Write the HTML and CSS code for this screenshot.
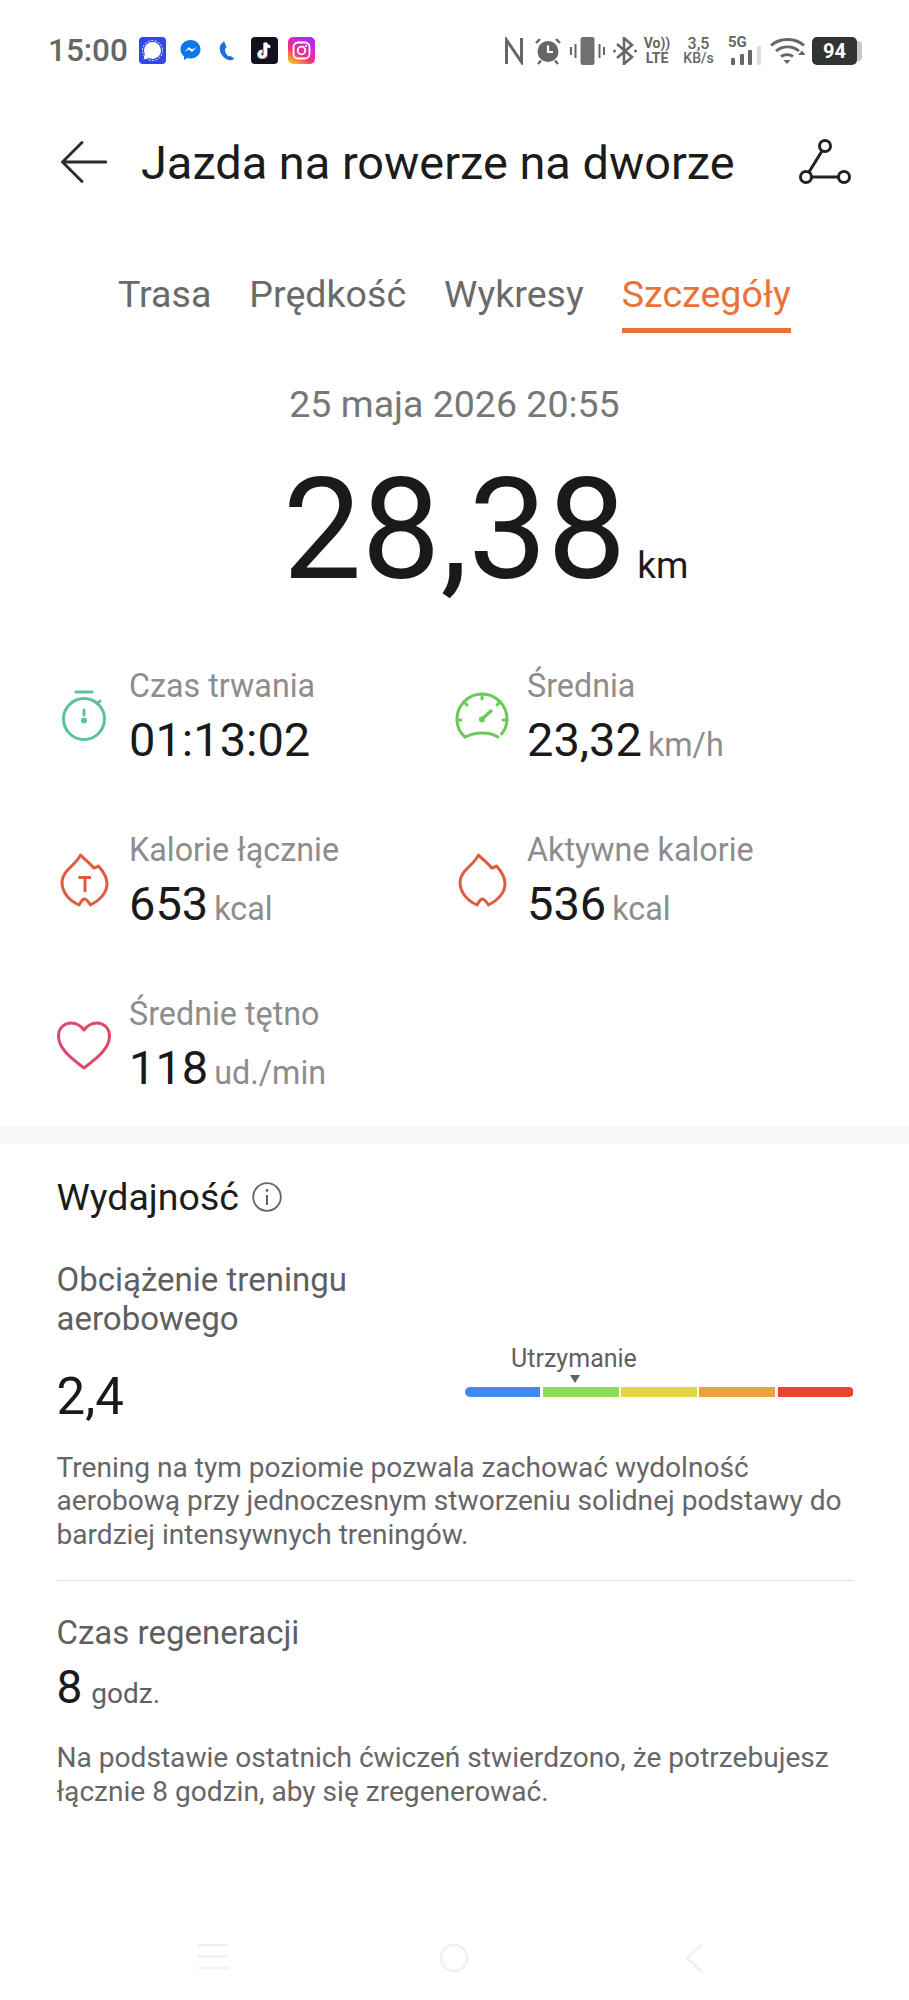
FILE: index.html
```html
<!DOCTYPE html>
<html lang="pl">
<head>
<meta charset="utf-8">
<title>Jazda na rowerze na dworze</title>
<link rel="stylesheet" href="styles.css">
</head>
<body>
<div class="page">
  <div class="statusbar">
    <div class="status-left">
      <span class="clock">15:00</span>
      <svg class="ico27 m-signal" viewBox="0 0 27 27"><rect width="27" height="27" rx="4" fill="#3247e8"/><circle cx="13.500" cy="13.500" r="8.500" fill="#fff"/><circle cx="13.500" cy="13.500" r="10" fill="none" stroke="#fff" stroke-width="1" stroke-dasharray="2 1.500"/><path d="M6 17l-1.500 5.500 5.500-1.500z" fill="#fff"/></svg>
      <svg class="m-msg" width="21" height="23" viewBox="0 0 21 23"><path d="M10.500 1C5 1 .5 5 .5 10.300c0 2.900 1.300 5.400 3.500 7.100V21l3.300-1.900c1 .3 2.100.5 3.200.5 5.500 0 10-4.100 10-9.300S16 1 10.500 1z" fill="#0a78ea"/><path d="M4.500 13l4.500-5 3 2.500 4.500-2.500-4.500 5-3-2.500z" fill="#fff"/></svg>
      <svg class="m-call" width="16" height="20" viewBox="0 0 16 20"><path d="M5 .5C2 2 .5 5 .8 8.500 1.200 13 5 18 10 19c2.500.5 5-.5 5.500-1.500-1-.5-2.500-1.500-4-2.500-1 .5-2 .5-3-.5C7 13 5.800 10.500 6 8.500c.2-1 .8-1.500 1.500-1.700C7 4.500 6 2 5 .5z" fill="#1d6fd8"/></svg>
      <svg class="ico27 m-tt" viewBox="0 0 27 27"><rect width="27" height="27" rx="4" fill="#11121f"/><path d="M14.500 5.500v11.500a3 3 0 1 1-3-3" fill="none" stroke="#3fe3de" stroke-width="3" transform="translate(-1 .5)"/><path d="M14.500 5.500v11.500a3 3 0 1 1-3-3" fill="none" stroke="#f0335c" stroke-width="3" transform="translate(1 .5)"/><path d="M14.500 5.500v11.500a3 3 0 1 1-3-3M14.500 5.500c.3 2.500 2 4 4.800 4.200" fill="none" stroke="#fff" stroke-width="3"/></svg>
      <svg class="ico27 m-ig" viewBox="0 0 27 27"><defs><linearGradient id="ig" x1="0.2" y1="1" x2="0.8" y2="0"><stop offset="0" stop-color="#fdc21e"/><stop offset=".35" stop-color="#f5337a"/><stop offset=".75" stop-color="#c92ad8"/><stop offset="1" stop-color="#a52bf0"/></linearGradient></defs><rect width="27" height="27" rx="5" fill="url(#ig)"/><rect x="5.500" y="5.500" width="16" height="16" rx="4.500" fill="none" stroke="#fff" stroke-width="1.800"/><circle cx="13.500" cy="13.500" r="3.800" fill="none" stroke="#fff" stroke-width="1.800"/><circle cx="18" cy="9" r="1" fill="#fff"/></svg>
    </div>
    <div class="status-right">
      <svg class="m-nfc" width="20" height="28" viewBox="0 0 20 28"><path d="M2.500 27V3l15 22V1" fill="none" stroke="#666" stroke-width="3"/></svg>
      <svg class="m-alarm" width="28" height="28" viewBox="0 0 28 28"><circle cx="14" cy="14.500" r="10.500" fill="#666"/><path d="M14 8.500v6.500h5" fill="none" stroke="#fff" stroke-width="2.200"/><path d="M2 6l4-4M26 6l-4-4M4 27l3-3.500M24 27l-3-3.500" stroke="#666" stroke-width="2.400" fill="none"/></svg>
      <svg class="m-vib" width="35" height="28" viewBox="0 0 35 28"><rect x="10.500" y="0" width="14" height="28" rx="2.500" fill="#707070"/><path d="M1 10v8M5.500 7v14M29.500 7v14M34 10v8" stroke="#666" stroke-width="2"/></svg>
      <svg class="m-bt" width="24" height="28" viewBox="0 0 24 28"><path d="M4 7l15 13-8 7V1l8 7L4 21" fill="none" stroke="#666" stroke-width="2.600"/><circle cx="1.500" cy="14" r="1.500" fill="#666"/><circle cx="22.500" cy="14" r="1.500" fill="#666"/></svg>
      <div class="volte"><span class="volte-top">Vo))</span><span>LTE</span></div>
      <div class="speed"><span class="speed-top">3,5</span><span>KB/s</span></div>
      <div class="net">
        <span class="net-label">5G</span>
        <svg class="net-bars" width="34" height="20" viewBox="0 0 34 20"><rect x="3" y="12" width="4" height="7" rx="1" fill="#666"/><rect x="12" y="8" width="4" height="11" rx="1" fill="#666"/><rect x="20" y="4" width="4" height="15" rx="1" fill="#666"/><rect x="29" y="0" width="4" height="19" rx="1" fill="#ddd"/></svg>
      </div>
      <svg class="m-wifi" width="35" height="28" viewBox="0 0 35 28"><path d="M1 8.500C10 .5 25 .5 34 8.500M6 14c6.500-5.500 16.500-5.500 23 0M11 19.500c3.500-2.500 9-2.500 12 0" fill="none" stroke="#666" stroke-width="2.800"/><path d="M13.500 23h7l-3.500 4zM28 18l4-4.500 3.500 4.500z" fill="#666"/></svg>
      <div class="battery"><span class="battery-body">94</span><span class="battery-tip"></span></div>
    </div>
  </div>

  <header class="titlebar">
    <svg class="back" width="46" height="42" viewBox="0 0 46 42"><path d="M21 1.500L1.500 21 21 40.500M1.500 21H45" fill="none" stroke="#2b2b2b" stroke-width="2.800" stroke-linecap="round" stroke-linejoin="round"/></svg>
    <h1 class="title">Jazda na rowerze na dworze</h1>
    <svg class="route" width="52" height="46" viewBox="0 0 52 46"><circle cx="26" cy="7" r="5.500" fill="none" stroke="#222" stroke-width="3"/><circle cx="7" cy="38" r="5.500" fill="none" stroke="#222" stroke-width="3"/><circle cx="45" cy="38" r="5.500" fill="none" stroke="#222" stroke-width="3"/><path d="M23 12L10 33M12.500 38h27" fill="none" stroke="#222" stroke-width="3"/></svg>
  </header>

  <nav class="tabs">
    <span class="tab">Trasa</span>
    <span class="tab">Prędkość</span>
    <span class="tab">Wykresy</span>
    <span class="tab tab-active">Szczegóły</span>
  </nav>

  <div class="date">25 maja 2026 20:55</div>
  <div class="distance"><span class="distance-num">28,38</span><span class="distance-unit">km</span></div>

  <section class="stats">
    <div class="stat">
      <svg class="stat-ico" width="54" height="54" viewBox="0 0 54 54"><g fill="none" stroke="#5cc1a0" stroke-width="3" stroke-linecap="round"><circle cx="27" cy="30" r="20.500"/><path d="M19 3h16M41 14l2-2M27 21v5"/></g><circle cx="27" cy="31.500" r="3" fill="#5cc1a0"/></svg>
      <div class="stat-text"><div class="stat-label">Czas trwania</div><div class="stat-value">01:13:02</div></div>
    </div>
    <div class="stat">
      <svg class="stat-ico" width="54" height="54" viewBox="0 0 54 54"><g transform="translate(0 3)"><g fill="none" stroke="#6cc95c" stroke-width="3" stroke-linecap="round"><path d="M10 45C4 40 2 33 2 27a25 25 0 0 1 50 0c0 6-2 11-5.500 15"/><path d="M10 45c10-5.500 25-5.500 33 0"/><path d="M27 2v5M9 10l3 3M45 10l-3 3M2 28h4M52 28h-4"/><path d="M27 27l9-8" stroke-width="3.500"/></g><circle cx="27" cy="27.500" r="3" fill="#6cc95c"/></g></svg>
      <div class="stat-text"><div class="stat-label">Średnia</div><div class="stat-value">23,32<span class="stat-unit">km/h</span></div></div>
    </div>
    <div class="stat">
      <svg class="stat-ico" width="54" height="54" viewBox="0 0 54 54"><path d="M23.500 2C27 6 33 10 36.500 15c1.500 0 3.500-1 5-2C46 18 50 25 50 31c0 9-8 17-16.500 21-2.500-4-4.500-6-6-6-2.500 0-3.500 3-5.500 6C13 48 5 40 5 29 5 18 19 12 23.500 2z" fill="none" stroke="#e05a3c" stroke-width="3" stroke-linejoin="round"/><path d="M21.500 24.500H34M28 24.500V39" fill="none" stroke="#e05a3c" stroke-width="3"/></svg>
      <div class="stat-text"><div class="stat-label">Kalorie łącznie</div><div class="stat-value">653<span class="stat-unit">kcal</span></div></div>
    </div>
    <div class="stat">
      <svg class="stat-ico" width="54" height="54" viewBox="0 0 54 54"><path d="M23.500 2C27 6 33 10 36.500 15c1.500 0 3.500-1 5-2C46 18 50 25 50 31c0 9-8 17-16.500 21-2.500-4-4.500-6-6-6-2.500 0-3.500 3-5.500 6C13 48 5 40 5 29 5 18 19 12 23.500 2z" fill="none" stroke="#e05a3c" stroke-width="3" stroke-linejoin="round"/></svg>
      <div class="stat-text"><div class="stat-label">Aktywne kalorie</div><div class="stat-value">536<span class="stat-unit">kcal</span></div></div>
    </div>
    <div class="stat">
      <svg class="stat-ico" width="54" height="54" viewBox="0 0 54 54"><path d="M27 51C17 43 1.500 33 1.500 19 1.500 11 7.500 6 14 6c6 0 10 3 13 7 3-4 7-7 13-7 6.500 0 12.500 5 12.500 13C52.500 33 37 43 27 51z" fill="none" stroke="#e0476b" stroke-width="3" stroke-linejoin="round"/></svg>
      <div class="stat-text"><div class="stat-label">Średnie tętno</div><div class="stat-value">118<span class="stat-unit">ud./min</span></div></div>
    </div>
  </section>

  <div class="band"></div>

  <section class="perf">
    <div class="perf-head">
      <h2 class="perf-title">Wydajność</h2>
      <svg class="info" width="30" height="30" viewBox="0 0 30 30"><circle cx="15" cy="15" r="13.800" fill="none" stroke="#666" stroke-width="1.800"/><path d="M15 13v10" stroke="#666" stroke-width="2"/><circle cx="15" cy="8.500" r="1.400" fill="#666"/></svg>
    </div>
    <div class="load">
      <div class="load-left">
        <div class="load-label">Obciążenie treningu<br>aerobowego</div>
        <div class="load-value">2,4</div>
      </div>
      <div class="gauge">
        <div class="gauge-label">Utrzymanie</div>
        <div class="gauge-mark"></div>
        <div class="gauge-bar">
          <span class="seg seg-blue"></span>
          <span class="seg seg-green"></span>
          <span class="seg seg-yellow"></span>
          <span class="seg seg-orange"></span>
          <span class="seg seg-red"></span>
        </div>
      </div>
    </div>
    <p class="note">Trening na tym poziomie pozwala zachować wydolność<br>aerobową przy jednoczesnym stworzeniu solidnej podstawy do<br>bardziej intensywnych treningów.</p>
    <div class="rule"></div>
    <div class="regen-label">Czas regeneracji</div>
    <div class="regen-value">8<span class="regen-unit">godz.</span></div>
    <p class="note note-regen">Na podstawie ostatnich ćwiczeń stwierdzono, że potrzebujesz<br>łącznie 8 godzin, aby się zregenerować.</p>
  </section>

  <footer class="navbar">
    <svg class="nav-menu" width="30" height="30" viewBox="0 0 30 30"><path d="M0 2h30M0 13.500h30M0 25h30" stroke="#f0f0f0" stroke-width="2.500"/></svg>
    <svg class="nav-home" width="30" height="30" viewBox="0 0 30 30"><circle cx="15" cy="15" r="13" fill="none" stroke="#f0f0f0" stroke-width="2.500"/></svg>
    <svg class="nav-back" width="18" height="30" viewBox="0 0 18 30"><path d="M17 1L2 15l15 14" fill="none" stroke="#f0f0f0" stroke-width="2.500"/></svg>
  </footer>
</div>
</body>
</html>
```

FILE: styles.css
```css
* { box-sizing: border-box; }
html, body { margin: 0; padding: 0; background: #fff; }
.page {
  width: 909px;
  height: 2000px;
  overflow: hidden;
  display: flex;
  flex-direction: column;
  font-family: Roboto, "Noto Sans", sans-serif;
  color: #1c1c1c;
  background: #fff;
}

/* status bar */
.statusbar {
  height: 100px;
  padding: 36px 47px 0 48px;
  display: flex;
  justify-content: space-between;
  align-items: flex-start;
  color: #666;
}
.status-left, .status-right { display: flex; align-items: center; height: 29px; }
.clock { font-size: 31.500px; font-weight: 500; line-height: 29px; width: 91px; }
.ico27 { width: 27px; height: 27px; display: block; }
.m-msg { margin-left: 14px; }
.m-call { margin-left: 18px; }
.m-tt { margin-left: 16px; }
.m-ig { margin-left: 10px; }
.m-alarm { margin-left: 10px; }
.m-vib { margin-left: 8px; }
.m-bt { margin-left: 8px; }
.volte, .speed {
  display: flex;
  flex-direction: column;
  align-items: center;
  font-weight: 500;
  font-size: 14px;
  line-height: 15px;
}
.volte { margin-left: 8px; width: 24px; white-space: nowrap; font-weight: 700; }
.speed { margin-left: 15px; width: 29px; white-space: nowrap; }
.speed-top { font-size: 16px; }
.net { margin-left: 15px; width: 34px; position: relative; height: 29px; }
.net-label { position: absolute; left: 0; top: -1px; font-size: 15px; font-weight: 700; line-height: 14px; }
.net-bars { position: absolute; left: 0; top: 10px; }
.m-wifi { margin-left: 8px; }
.battery { margin-left: 7px; display: flex; align-items: center; }
.battery-body {
  width: 45px;
  height: 28px;
  border-radius: 5px;
  background: #333;
  color: #fff;
  font-size: 20px;
  font-weight: 700;
  line-height: 28px;
  text-align: center;
}
.battery-tip { width: 5px; height: 20px; background: #c8c8c8; border-radius: 0 4px 4px 0; }

/* title */
.titlebar {
  height: 92px;
  padding: 32px 58px 0 61px;
  display: flex;
  align-items: flex-start;
}
.back { margin-top: 9px; flex: none; }
.title {
  margin: 1px 0 0 34px;
  font-size: 46.900px;
  font-weight: 400;
  line-height: 60px;
  flex: 1;
  color: #1c1c1c;
  white-space: nowrap;
}
.route { margin-top: 7px; flex: none; }

/* tabs */
.tabs {
  height: 139px;
  display: flex;
  padding: 80px 0 0 118px;
  align-items: flex-start;
}
.tab {
  font-size: 37.600px;
  line-height: 44px;
  color: #6a6a6a;
  margin-right: 38px;
  height: 60.500px;
}
.tab-active {
  color: #e8733a;
  border-bottom: 5px solid #e8733a;
  margin-right: 0;
}

.date { text-align: center; font-size: 37.500px; line-height: 42px; color: #777; margin-top: 52px; }
.distance { display: flex; justify-content: center; align-items: baseline; margin-top: 24px; padding-left: 62px; height: 163px; }
.distance-num { font-size: 140.500px; line-height: 163px; color: #1a1a1a; }
.distance-unit { font-size: 37px; margin-left: 11px; color: #1c1c1c; }

/* stats */
.stats {
  display: grid;
  grid-template-columns: 398px 398px;
  grid-auto-rows: 164px;
  padding: 0 0 0 57px;
  margin-top: 53px;
}
.stat { display: flex; align-items: flex-start; }
.stat-ico { flex: none; margin-top: 24px; margin-right: 18px; }
.stat-label { font-size: 32.300px; line-height: 42px; color: #8d8d8d; }
.stat-value { font-size: 47px; line-height: 56px; margin-top: 5px; color: #1a1a1a; white-space: nowrap; }
.stat-unit { font-size: 32.300px; color: #8d8d8d; margin-left: 6px; }

.band { height: 18px; background: #f7f7f7; margin-top: -31px; flex: none; }

/* performance */
.perf { padding: 29px 55.500px 0 56.500px; }
.perf-head { display: flex; align-items: center; height: 48px; }
.perf-title { margin: 0; font-size: 37.500px; font-weight: 400; line-height: 48px; color: #1c1c1c; }
.info { margin-left: 13px; }
.load { display: flex; justify-content: space-between; margin-top: 39px; height: 190.500px; }
.load-label { font-size: 33px; line-height: 39px; color: #5f5f5f; }
.load-value { font-size: 51px; line-height: 60px; margin-top: 28.500px; color: #1a1a1a; }
.gauge { width: 389px; margin-top: 83.500px; }
.gauge-label { font-size: 25px; line-height: 30px; color: #5f5f5f; text-align: center; width: 173px; margin-left: 23px; white-space: nowrap; }
.gauge-mark {
  width: 0; height: 0;
  margin: 1px 0 4px 105px;
  border-left: 5px solid transparent;
  border-right: 5px solid transparent;
  border-top: 8px solid #5f5f5f;
}
.gauge-bar { display: flex; gap: 2.500px; height: 10px; border-radius: 5px; overflow: hidden; }
.seg { flex: 1; }
.seg-blue { background: #4088f2; }
.seg-green { background: #8cdc58; }
.seg-yellow { background: #e6d544; }
.seg-orange { background: #eda23e; }
.seg-red { background: #e8452e; }
.note { margin: 0; font-size: 28.100px; line-height: 33.800px; color: #666; white-space: nowrap; }
.rule { height: 1px; background: #e2e2e2; margin-top: 28px; }
.regen-label { font-size: 33px; line-height: 40px; color: #5f5f5f; margin-top: 32px; }
.regen-value { font-size: 46px; line-height: 56px; margin-top: 6px; color: #1a1a1a; }
.regen-unit { font-size: 28px; color: #5f5f5f; margin-left: 9px; }
.note-regen { margin-top: 19px; }

/* navigation */
.navbar {
  margin-top: auto;
  height: 86px;
  padding: 29px 0 0 198px;
  display: flex;
  align-items: flex-start;
}
.nav-home { margin-left: 211px; }
.nav-back { margin-left: 216px; }
```
